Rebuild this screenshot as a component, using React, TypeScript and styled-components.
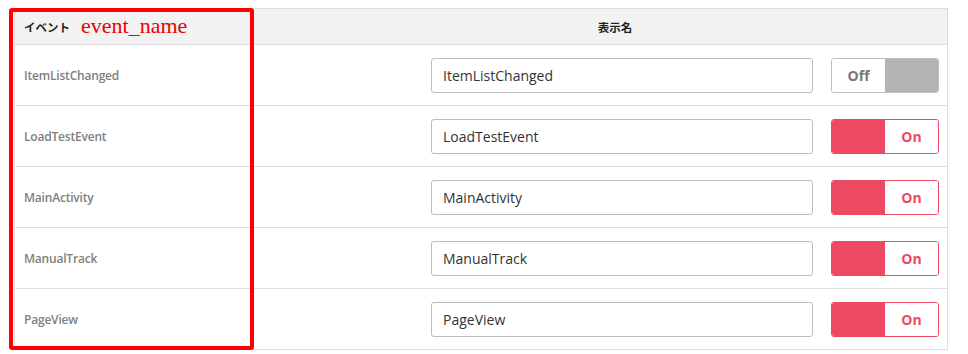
import React from 'react'
import styled, { createGlobalStyle } from 'styled-components'

const GlobalStyle = createGlobalStyle`
  body {
    margin: 0;
    background: #fff;
    font-family: "Open Sans", "Noto Sans CJK JP", sans-serif;
  }
`

const Page = styled.div`
  position: relative;
  padding: 8px 20px 0 14px;
  width: 934px;
`

const Table = styled.div`
  border: 1px solid #dedede;
  border-bottom: none;
`

const HeaderRow = styled.div`
  display: grid;
  grid-template-columns: 268px 1fr;
  height: 35px;
  background: #f2f2f2;
  border-bottom: 1px solid #dedede;
  align-items: center;
`

const HeadCell = styled.div<{ $center?: boolean }>`
  padding-left: ${({ $center }) => ($center ? '0' : '9px')};
  font-family: "Noto Sans CJK JP", sans-serif;
  font-size: 11.5px;
  font-weight: 700;
  color: #222;
  display: flex;
  align-items: center;
  justify-content: ${({ $center }) => ($center ? 'center' : 'flex-start')};
`

const Annotation = styled.span`
  font-family: "Liberation Serif", serif;
  font-weight: 400;
  font-size: 22px;
  color: #ee0000;
  margin-left: 11px;
  margin-top: -2px;
`

const Row = styled.div`
  display: grid;
  grid-template-columns: 1fr 382px 107px;
  column-gap: 18px;
  align-items: center;
  height: 60px;
  padding: 0 9px 0 9px;
  border-bottom: 1px solid #dedede;
`

const EventName = styled.div`
  font-family: "Open Sans", sans-serif;
  font-size: 12px;
  font-weight: 600;
  color: #808080;
  letter-spacing: -0.2px;
`

const NameInput = styled.input`
  box-sizing: border-box;
  width: 382px;
  height: 35px;
  border: 1px solid #bdbdbd;
  border-radius: 3px;
  padding: 0 11px;
  font-family: "Open Sans", sans-serif;
  font-size: 14px;
  color: #333;
  outline: none;
`

const Toggle = styled.div<{ $on: boolean }>`
  box-sizing: border-box;
  display: grid;
  grid-template-columns: 1fr 1fr;
  width: 108px;
  height: 35px;
  border: 1px solid ${({ $on }) => ($on ? '#ec4a62' : '#bdbdbd')};
  border-radius: 3px;
  overflow: hidden;
`

const Half = styled.div<{ $fill?: string; $color?: string }>`
  display: flex;
  align-items: center;
  justify-content: center;
  background: ${({ $fill }) => $fill || '#fff'};
  color: ${({ $color }) => $color || '#666'};
  font-family: "Open Sans", sans-serif;
  font-size: 14px;
  font-weight: 700;
`

const Highlight = styled.div`
  position: absolute;
  left: 9px;
  top: 8px;
  width: 245px;
  height: 342px;
  box-sizing: border-box;
  border: 4px solid #ff0000;
  border-radius: 3px;
  pointer-events: none;
`

const events = [
  { name: 'ItemListChanged', on: false },
  { name: 'LoadTestEvent', on: true },
  { name: 'MainActivity', on: true },
  { name: 'ManualTrack', on: true },
  { name: 'PageView', on: true },
]

const App = () => {
  return (
    <Page>
      <GlobalStyle />
      <Table>
        <HeaderRow>
          <HeadCell>
            イベント
            <Annotation>event_name</Annotation>
          </HeadCell>
          <HeadCell $center>表示名</HeadCell>
        </HeaderRow>
        {events.map((ev) => (
          <Row key={ev.name}>
            <EventName>{ev.name}</EventName>
            <NameInput defaultValue={ev.name} />
            <Toggle $on={ev.on}>
              {ev.on ? (
                <>
                  <Half $fill="#ec4a62" />
                  <Half $color="#ec4a62">On</Half>
                </>
              ) : (
                <>
                  <Half $color="#777">Off</Half>
                  <Half $fill="#b4b4b6" />
                </>
              )}
            </Toggle>
          </Row>
        ))}
      </Table>
      <Highlight />
    </Page>
  )
}

export default App
